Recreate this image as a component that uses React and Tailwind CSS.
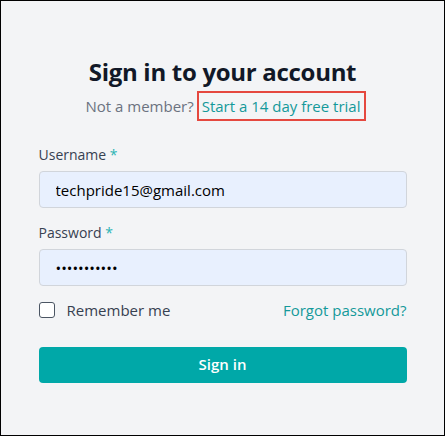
import React, { useState } from "react";

const font = { fontFamily: '"Open Sans", "Noto Sans", sans-serif' };

export default function App() {
  const [remember, setRemember] = useState(false);

  return (
    <div
      className="w-[445px] h-[436px] bg-[#f3f4f6] border border-black flex flex-col items-center"
      style={font}
    >
      <div className="w-[368px] flex flex-col pt-[55px]">
        <h2 className="text-center text-[24px] leading-[32px] font-bold tracking-[-0.3px] text-[#111827]">
          Sign in to your account
        </h2>
        <p className="mt-[3px] pl-[6px] text-center text-[15px] text-[#6b7280] flex justify-center items-center">
          <span>Not a member?</span>
          <a
            href="#"
            className="ml-[3px] px-[3px] py-[3px] border-2 border-[#e5483f] text-[#14999a] font-medium leading-[20px]"
          >
            Start a 14 day free trial
          </a>
        </p>

        <form className="mt-[24px] flex flex-col" onSubmit={(e) => e.preventDefault()}>
          <label className="text-[14px] leading-[20px] text-[#374151]">
            Username <span className="text-[#2bb3b3]">*</span>
          </label>
          <input
            type="text"
            defaultValue="techpride15@gmail.com"
            className="mt-[6px] h-[37px] px-[16px] rounded-[4px] bg-[#e8f0fe] border border-[#d1d5db] text-[15px] text-black outline-none"
          />

          <label className="mt-[15px] text-[14px] leading-[20px] text-[#374151]">
            Password <span className="text-[#2bb3b3]">*</span>
          </label>
          <input
            type="password"
            defaultValue="techpride15"
            className="mt-[6px] h-[37px] px-[16px] rounded-[4px] bg-[#e8f0fe] border border-[#d1d5db] text-[15px] text-black outline-none"
          />

          <div className="mt-[13px] flex items-center justify-between">
            <label className="flex items-center gap-[12px] text-[15px] text-[#374151]">
              <input
                type="checkbox"
                checked={remember}
                onChange={(e) => setRemember(e.target.checked)}
                className="appearance-none w-[16px] h-[16px] rounded-[3px] border border-[#4b5563] bg-white"
              />
              Remember me
            </label>
            <a href="#" className="text-[15px] font-medium text-[#14999a]">
              Forgot password?
            </a>
          </div>

          <button
            type="submit"
            className="mt-[25px] h-[36px] rounded-[4px] bg-[#00a8a8] text-white text-[15px] font-semibold"
          >
            Sign in
          </button>
        </form>
      </div>
    </div>
  );
}
